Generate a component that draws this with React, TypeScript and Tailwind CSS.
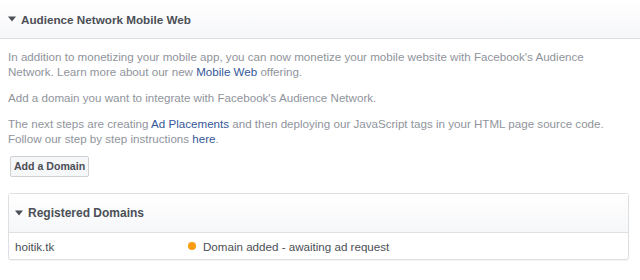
const rows = [{ domain: "hoitik.tk", status: "Domain added - awaiting ad request" }];

function Caret() {
  return (
    <svg width="8" height="6" viewBox="0 0 8 6" className="mr-[5px] shrink-0">
      <path d="M0 0.5h8L4 5.5z" fill="#4b4f56" />
    </svg>
  );
}

export default function App() {
  return (
    <div className="w-[640px] h-[280px] bg-white font-['Liberation_Sans',Arial,sans-serif] text-[12px] leading-[15px] overflow-hidden">
      <div className="flex items-center h-[39px] pl-2 border-b border-[#dddfe2] bg-gradient-to-b from-white to-[#f6f7f9]">
        <Caret />
        <span className="font-bold text-[#4b4f56] text-[11.7px]">Audience Network Mobile Web</span>
      </div>
      <div className="pl-2 pr-[11px] pt-[10px]">
        <div className="text-[11.6px] text-[#90949c]">
          <p>
            In addition to monetizing your mobile app, you can now monetize your mobile website with Facebook's Audience
            Network. Learn more about our new <a className="text-[#365899]">Mobile Web</a> offering.
          </p>
          <p className="mt-[11px]">Add a domain you want to integrate with Facebook's Audience Network.</p>
          <p className="mt-[11px]">
            The next steps are creating <a className="text-[#365899]">Ad Placements</a> and then deploying our JavaScript
            tags in your HTML page source code.
            <br />
            Follow our step by step instructions <a className="text-[#365899]">here</a>.
          </p>
        </div>
        <button className="mt-[10px] ml-[2px] h-[21px] w-[79px] rounded-[2px] border border-[#ced0d4] bg-[#f6f7f9] font-bold text-[#4b4f56] text-[10.6px] leading-none">
          Add a Domain
        </button>
        <div className="mt-[16px] border border-[#dddfe2] rounded-[3px] shadow-[0_1px_1px_rgba(0,0,0,0.05)]">
          <div className="flex items-center h-[39px] pl-[6px] border-b border-[#dddfe2] bg-gradient-to-b from-white to-[#f6f7f9]">
            <Caret />
            <span className="font-bold text-[#4b4f56]">Registered Domains</span>
          </div>
          {rows.map((r) => (
            <div key={r.domain} className="flex items-center h-[26px] pl-[6px] text-[#4b4f56] text-[11.6px]">
              <span className="w-[173px] shrink-0">{r.domain}</span>
              <span className="w-2 h-2 rounded-full bg-[#fa9d0f] mr-[7px]" />
              <span>{r.status}</span>
            </div>
          ))}
        </div>
      </div>
    </div>
  );
}
